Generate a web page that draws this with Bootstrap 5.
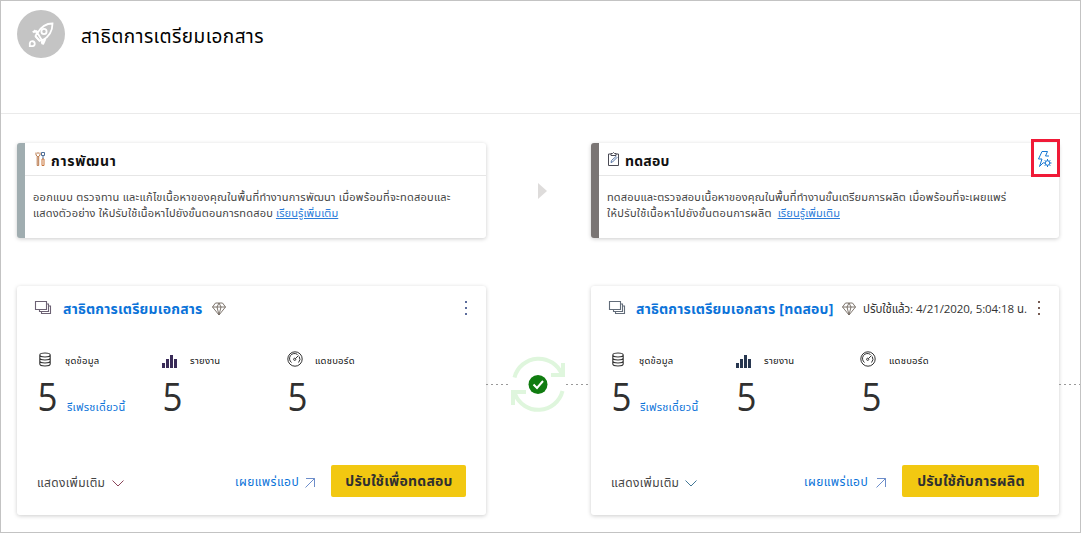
<!DOCTYPE html>
<html lang="th">
<head>
<meta charset="utf-8">
<meta name="viewport" content="width=device-width, initial-scale=1">
<title>สาธิตการเตรียมเอกสาร</title>
<link href="https://cdn.jsdelivr.net/npm/bootstrap@5.3.0/dist/css/bootstrap.min.css" rel="stylesheet">
<style>
  body { font-family: "Open Sans", "Noto Sans", "Noto Sans Thai", sans-serif; color: #252423; font-size: 12px; }
  .page { height: 533px; border: 1px solid #c3c3c3; }
  .topbar { height: 113px; border-bottom: 1px solid #eaeaea; padding: 9px 16px; }
  .logo { width: 48px; height: 48px; background: #c4c4c4; }
  .topbar h1 { font-size: 19px; letter-spacing: .46px; line-height: 24px; margin: 14px 0 0 16px; color: #000; font-weight: 400; }
  .t { white-space: nowrap; display: block; flex-shrink: 0; }
  .stages { display: grid; grid-template-columns: 469px 105px 468px 21px; padding-left: 16px; }
  .stages.info { padding-top: 29px; height: 172px; }
  .panel { background: #fff; border-radius: 3px; box-shadow: 0 1px 4px rgba(0,0,0,.2); }
  .info .panel { height: 95px; border-left: 8px solid #a0adb0; }
  .info .panel.test { border-left-color: #7a7574; }
  .info-head { height: 33px; border-bottom: 1px solid #e6e6e6; padding-left: 9px; }
  .info-head h2 { font-size: 14px; letter-spacing: .7px; line-height: 20px; font-weight: 700; margin: 8px 0 0 0; color: #111; }
  .test .info-head h2 { letter-spacing: .2px; }
  .info-body { padding: 13px 0 0 8px; font-size: 11px; line-height: 16px; color: #444; }
  .info-body .t { height: 16px; }
  .s15 { letter-spacing: .16px; }
  .s19 { letter-spacing: .19px; }
  .s25 { letter-spacing: .25px; }
  .s30 { letter-spacing: .31px; }
  a { color: #0b73d9; text-decoration: none; }
  .info-body a { text-decoration: underline; color: #2b7cd9; letter-spacing: .08px; }
  .rules { width: 29px; height: 38px; border: 3px solid #f01a37; margin: -4px -1px 0 auto; padding: 8px 0 0 3px; }
  .work { height: 229px; }
  .work-head { height: 46px; padding: 11px 0 0 17px; }
  .work-head h3 { font-size: 14px; letter-spacing: .2px; line-height: 24px; font-weight: 700; margin: 0; color: #0b73d9; }
  .deployed { font-size: 11.5px; line-height: 24px; letter-spacing: -.07px; margin: 0 0 0 7px; color: #333; }
  .stats { height: 133px; padding: 18px 0 0 20px; }
  .stat { width: 125px; flex-shrink: 0; }
  .stat .name { font-size: 9.5px; letter-spacing: .25px; line-height: 20px; color: #111; margin-top: 1px; }
  .num { font-family: "Open Sans", sans-serif; font-size: 38px; line-height: 44px; width: 27px; height: 44px; color: #303030; margin-top: 3px; transform: scaleX(.92); transform-origin: 6px 0; }
  .refresh { font-size: 11px; letter-spacing: .25px; line-height: 20px; margin: 26px 0 0 3px; }
  .work-foot { height: 32px; padding-left: 20px; }
  .work-foot .t { line-height: 34px; letter-spacing: .45px; }
  .work-foot span.more { line-height: 35px; width: 75px; color: #444; letter-spacing: .35px; }
  .deploy { background: #f2c811; color: #303030; border-radius: 2px; font-size: 14px; font-weight: 700; height: 32px; border: 0; padding: 0 0 0 1px; }
  .work-foot .deploy .t { line-height: 32px; letter-spacing: .25px; }
  .dash { height: 1px; margin-top: 98px; background: repeating-linear-gradient(90deg,#999 0 2px,transparent 2px 5px); }
  svg { display: block; flex-shrink: 0; }
</style>
</head>
<body>
<svg width="0" height="0" class="position-absolute">
  <defs>
    <symbol id="stack" viewBox="0 0 18 15"><path d="M1.500 1.500h11v8h-11zM13 4h1.500v7.500H5.500v-1.500M15 6h1.500v7.500H7.500v-1.500" fill="none" stroke="currentColor" stroke-width="1.100"/></symbol>
    <symbol id="gem" viewBox="0 0 14 14"><path d="M3.500 1h7l3 4-6.500 8L.5 5zM.5 5h13M5 5l2 8 2-8M5 5l2-4 2 4" fill="none" stroke="#70665e" stroke-width=".9"/></symbol>
    <symbol id="db" viewBox="0 0 12 15"><path d="M.8 3v9c0 2.600 10.400 2.600 10.400 0V3M.8 3c0-2.600 10.400-2.600 10.400 0S.8 5.600.8 3M.8 6c0 2.600 10.400 2.600 10.400 0M.8 9c0 2.600 10.400 2.600 10.400 0" fill="none" stroke="#333" stroke-width="1.100"/></symbol>
    <symbol id="bars" viewBox="0 0 15 14"><path d="M0 9h3v5H0zM4 5h3v9H4zM8 1h3v13H8zM12 5h3v9h-3z" fill="currentColor"/></symbol>
    <symbol id="gauge" viewBox="0 0 16 16"><g fill="none" stroke="#333"><circle cx="8" cy="8" r="7.200"/><path d="M4.500 11.500a5 5 0 0 1 6-8M12.200 5.500a5 5 0 0 1-.7 6M8.500 7.500L11.500 4.500"/><circle cx="7.700" cy="8.300" r="1.100"/></g></symbol>
    <symbol id="out" viewBox="0 0 10 10"><path d="M1 .5h8.500V9M9.500.5L.5 9.500" fill="none" stroke="#5b80c4" stroke-width=".9"/></symbol>
    <symbol id="down" viewBox="0 0 12 7"><path d="M.5.500L6 6 11.500.500" fill="none" stroke="currentColor"/></symbol>
    <symbol id="dots" viewBox="0 0 2 14"><path d="M0 0h2v2H0zM0 6h2v2H0zM0 12h2v2H0z" fill="currentColor"/></symbol>
  </defs>
</svg>
<div class="page overflow-hidden">
  <header class="topbar d-flex align-items-start">
    <div class="logo rounded-circle">
      <svg width="48" height="48" viewBox="0 0 48 48" fill="none" stroke="#fff" stroke-width="1.800"><path d="M35.500 13.500C29 13.500 24 17 20.500 23L25 30.500C31 27.500 35.500 22 35.500 13.500zM21.500 21.500l-5 .3 3.500-1M20 23l-1.500 3 4 4.500L26 29.500M26 30v4.500l2.500-5.500M17.500 22.500l-1-.8 2-1.500M24.500 31l.8 3"/><circle cx="27" cy="21.500" r="2.600"/><path d="M18.500 26.500l4.500 5"/><path d="M12.800 36.200v-3a2.500 2.500 0 1 1 2.800 3z"/></svg>
    </div>
    <h1 class="t">สาธิตการเตรียมเอกสาร</h1>
  </header>

  <section class="stages info">
    <div class="panel">
      <div class="info-head d-flex">
        <svg width="11" height="16" viewBox="0 0 11 16" style="margin:8px 5px 0 1px" fill="none" stroke="#555" stroke-width="1"><path d="M2.200 5.500v9h1.500v-9M1 1.500v2.500L2.300 5.500h1.500L5 4V1.500M3 1v2" stroke="#b8784a"/><path d="M6.500 1.500h3v3h-3zM8 4.500V8" stroke="#4f6f98"/><path d="M7 8h2v6.500h-2z" stroke="#c8743a"/></svg>
        <h2 class="t">การพัฒนา</h2>
      </div>
      <div class="info-body">
        <div class="t s25">ออกแบบ ตรวจทาน และแก้ไขเนื้อหาของคุณในพื้นที่ทำงานการพัฒนา เมื่อพร้อมที่จะทดสอบและ</div>
        <div class="t"><span class="s19">แสดงตัวอย่าง ให้ปรับใช้เนื้อหาไปยังขั้นตอนการทดสอบ</span> <a href="#">เรียนรู้เพิ่มเติม</a></div>
      </div>
    </div>
    <svg width="10" height="16" viewBox="0 0 10 16" style="margin:40px 0 0 52px"><path d="M0 0l9 8-9 8z" fill="#dedcdb"/></svg>
    <div class="panel test">
      <div class="info-head d-flex">
        <svg width="11" height="14" viewBox="0 0 11 14" style="margin:9px 6px 0 0" fill="none" stroke="#4a4a55"><path d="M3 2H.5v11.500h10V2H8M3 3.500V1.500h1.500L5.500.5l1 1H8v2z"/><path d="M3 10.500l.5-2L8 4.500l1 1-4.500 4.500z" stroke="#46679b" stroke-width=".9"/></svg>
        <h2 class="t">ทดสอบ</h2>
        <div class="rules"><svg width="16" height="18" viewBox="0 0 16 18" fill="none" stroke="#1677d2"><path d="M5 1.500h5.500L8.500 6H12M5 1.500L1.500 9H5L2.500 16.500 6.500 12.500"/><circle cx="10.500" cy="13" r="2.300"/><path d="M10.500 9v1.700M10.500 15.300V17M6.500 13h1.700M12.800 13h1.700M7.700 10.200l1.200 1.200M12.100 14.600l1.200 1.200M13.300 10.200l-1.200 1.200M8.900 14.600l-1.200 1.200"/></svg></div>
      </div>
      <div class="info-body">
        <div class="t s15">ทดสอบและตรวจสอบเนื้อหาของคุณในพื้นที่ทำงานขั้นเตรียมการผลิต เมื่อพร้อมที่จะเผยแพร่</div>
        <div class="t"><span class="s30">ให้ปรับใช้เนื้อหาไปยังขั้นตอนการผลิต</span>&nbsp; <a href="#">เรียนรู้เพิ่มเติม</a></div>
      </div>
    </div>
  </section>

  <section class="stages">
    <div class="panel work">
      <div class="work-head d-flex">
        <svg width="18" height="15" style="margin:3px 11px 0 0;color:#6c6173"><use href="#stack"/></svg>
        <h3 class="t" style="width:149px">สาธิตการเตรียมเอกสาร</h3>
        <svg width="14" height="14" style="margin-top:5px"><use href="#gem"/></svg>
        <svg width="2" height="14" class="ms-auto" style="margin:4px 19px 0 0;color:#5b6c9c"><use href="#dots"/></svg>
      </div>
      <div class="stats d-flex">
        <div class="stat"><div class="d-flex"><svg width="12" height="15" style="margin:2px 14px 0 2px"><use href="#db"/></svg><span class="t name">ชุดข้อมูล</span></div>
          <div class="d-flex"><span class="num">5</span><a class="t refresh" href="#">รีเฟรชเดี๋ยวนี้</a></div></div>
        <div class="stat"><div class="d-flex"><svg width="15" height="14" style="margin:4px 13px 0 0;color:#392b58"><use href="#bars"/></svg><span class="t name">รายงาน</span></div><div class="num">5</div></div>
        <div class="stat"><div class="d-flex"><svg width="16" height="16" style="margin:1px 12px 0 0"><use href="#gauge"/></svg><span class="t name">แดชบอร์ด</span></div><div class="num">5</div></div>
      </div>
      <div class="work-foot d-flex">
        <span class="t more">แสดงเพิ่มเติม</span>
        <svg width="12" height="7" style="margin-top:15px;color:#8a4558"><use href="#down"/></svg>
        <a class="t ms-auto" href="#" style="width:70px">เผยแพร่แอป</a>
        <svg width="10" height="10" style="margin:13px 16px 0 0"><use href="#out"/></svg>
        <button class="deploy" style="width:135px;margin-right:20px"><span class="t">ปรับใช้เพื่อทดสอบ</span></button>
      </div>
    </div>
    <div class="d-flex align-items-start">
      <div class="dash" style="width:24px"></div>
      <svg width="56" height="56" viewBox="0 0 56 56" style="margin-top:70px"><g fill="none" stroke="#dff6dd" stroke-width="4"><path d="M4.500 21.500A25 25 0 0 1 52 18.500M53 7v12H41M52.500 35A25 25 0 0 1 5 38M3 49V36h13"/></g><circle cx="28" cy="28.500" r="9.500" fill="#107c10"/><path d="M23.500 28.500l3.500 3.500 6-7" fill="none" stroke="#fff" stroke-width="2"/></svg>
      <div class="dash" style="width:25px"></div>
    </div>
    <div class="panel work">
      <div class="work-head d-flex">
        <svg width="18" height="15" style="margin:3px 10px 0 0;color:#626c79"><use href="#stack"/></svg>
        <h3 class="t" style="width:206px">สาธิตการเตรียมเอกสาร [ทดสอบ]</h3>
        <svg width="14" height="14" style="margin-top:5px"><use href="#gem"/></svg>
        <span class="t deployed">ปรับใช้แล้ว: 4/21/2020, 5:04:18 น.</span>
        <svg width="2" height="14" class="ms-auto" style="margin:4px 19px 0 0;color:#765b52"><use href="#dots"/></svg>
      </div>
      <div class="stats d-flex">
        <div class="stat"><div class="d-flex"><svg width="12" height="15" style="margin:2px 15px 0 1px"><use href="#db"/></svg><span class="t name">ชุดข้อมูล</span></div>
          <div class="d-flex"><span class="num">5</span><a class="t refresh" href="#" style="margin-left:2px">รีเฟรชเดี๋ยวนี้</a></div></div>
        <div class="stat"><div class="d-flex"><svg width="15" height="14" style="margin:4px 13px 0 0;color:#283750"><use href="#bars"/></svg><span class="t name">รายงาน</span></div><div class="num">5</div></div>
        <div class="stat"><div class="d-flex"><svg width="16" height="16" style="margin:1px 13px 0 -1px"><use href="#gauge"/></svg><span class="t name">แดชบอร์ด</span></div><div class="num">5</div></div>
      </div>
      <div class="work-foot d-flex">
        <span class="t more">แสดงเพิ่มเติม</span>
        <svg width="12" height="7" style="margin:15px 0 0 -1px;color:#427796"><use href="#down"/></svg>
        <a class="t ms-auto" href="#" style="width:72px">เผยแพร่แอป</a>
        <svg width="10" height="10" style="margin:13px 16px 0 0"><use href="#out"/></svg>
        <button class="deploy" style="width:137px;margin-right:20px"><span class="t">ปรับใช้กับการผลิต</span></button>
      </div>
    </div>
    <div class="dash"></div>
  </section>
</div>
<script src="https://cdn.jsdelivr.net/npm/bootstrap@5.3.0/dist/js/bootstrap.bundle.min.js"></script>
</body>
</html>
